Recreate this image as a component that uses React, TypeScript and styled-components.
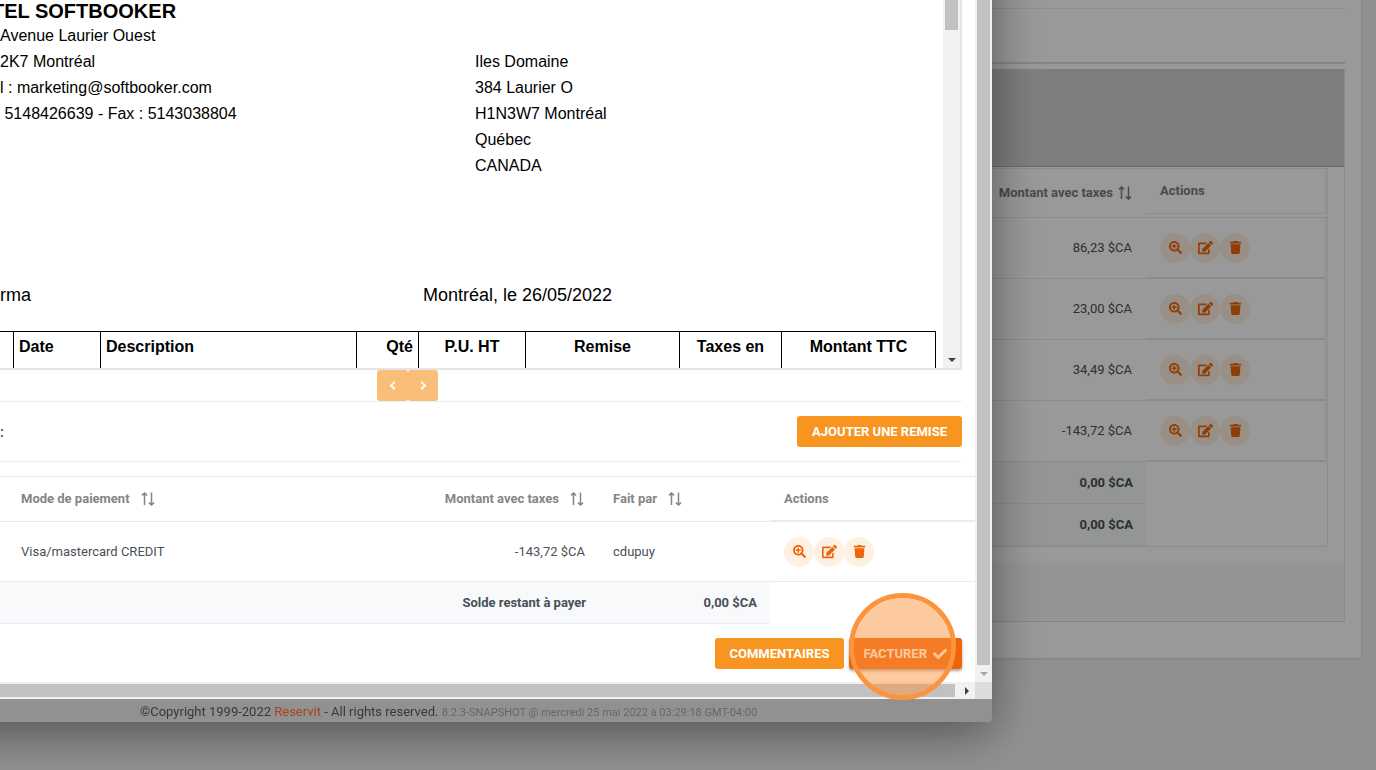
import React from "react";
import styled, { createGlobalStyle, css } from "styled-components";
import { FaSearchPlus, FaEdit, FaTrash, FaCheck, FaChevronLeft, FaChevronRight } from "react-icons/fa";

const GlobalStyle = createGlobalStyle`
  *, *::before, *::after { box-sizing: border-box; }
  body {
    margin: 0;
    overflow: hidden;
    background: #f1f1f1;
    color: #495057;
    font-family: Roboto, "Liberation Sans", sans-serif;
    font-size: 13px;
    line-height: 20px;
  }
  table { border-collapse: separate; border-spacing: 0; }
  th, td { padding: 0; text-align: left; font-weight: 400; }
  button { font: inherit; cursor: pointer; }
`;

/* ---------- shared pieces ---------- */

const SortSvg = styled.svg`
  flex: none;
  fill: none;
  stroke: currentColor;
  stroke-width: 1.5;
`;

const SortIcon = () => (
  <SortSvg width="14" height="14" viewBox="0 0 14 14" aria-hidden="true">
    <path d="M3.5 13V1M1 3.4 3.5 1 6 3.4" />
    <path d="M10.5 .5V13M8 10.6 10.5 13 13 10.6" />
  </SortSvg>
);

const RoundButton = styled.button`
  display: flex;
  align-items: center;
  justify-content: center;
  width: 30px;
  height: 30px;
  padding: 0;
  border: 0;
  border-radius: 50%;
  background: #fef0e2;
  color: #ed660c;
  font-size: 13px;
`;

const ActionList = styled.div`
  display: flex;
`;

const RowActions = () => (
  <ActionList>
    <RoundButton type="button" aria-label="Voir"><FaSearchPlus /></RoundButton>
    <RoundButton type="button" aria-label="Modifier"><FaEdit size={15} /></RoundButton>
    <RoundButton type="button" aria-label="Supprimer"><FaTrash /></RoundButton>
  </ActionList>
);

const SortLabel = styled.span<{ $gap: number }>`
  display: inline-flex;
  align-items: center;
  gap: ${(p) => p.$gap}px;
  white-space: nowrap;
`;

/* ---------- page behind the dialog ---------- */

const Page = styled.main`
  min-height: 100vh;
  padding-right: 15px;
`;

const Card = styled.section`
  padding: 8px 16px 36px 0;
  background: #fff;
  box-shadow: 0 1px 3px rgba(0, 0, 0, 0.12);
`;

const Strip = styled.div`
  height: 56px;
  margin-bottom: 5px;
  border-top: 1px solid #ebebeb;
  border-bottom: 2px solid #dedede;
`;

const Panel = styled.div`
  border-right: 1px solid #e6e6e6;
  border-bottom: 1px solid #dcdcdc;
`;

const PanelHeader = styled.div`
  height: 98px;
  background: #d3d3d3;
  border-bottom: 1px solid #b0b0b0;
`;

const PanelBody = styled.div`
  padding: 1px 16px 16px 0;
`;

const PanelFooter = styled.div`
  height: 58px;
  background: #f7f7f7;
`;

const AmountTable = styled.table`
  width: 100%;
  border: 1px solid #e9e9e9;
  border-left: 0;
`;

const AmountHead = styled.th`
  height: 49px;
  padding-right: 14px;
  border-bottom: 1px solid #e9e9e9;
  color: #7c7c7c;
  font-weight: 700;
  text-align: right;
`;

const AmountCell = styled.td<{ $total?: boolean }>`
  height: ${(p) => (p.$total ? 42 : 61)}px;
  padding-right: ${(p) => (p.$total ? 13 : 14)}px;
  border-bottom: 1px solid #e9e9e9;
  text-align: right;
  ${(p) => p.$total && css`
    background: #f7f8f9;
    font-weight: 700;
  `}
`;

const ActionHead = styled.th`
  width: 181px;
  padding-right: 1px;
  vertical-align: top;
  color: #7c7c7c;
  font-weight: 700;
  line-height: 44px;
  border-bottom: 1px solid #e9e9e9;
`;

const ActionHeadBox = styled.div`
  padding-left: 14px;
  border-right: 1px solid #e9e9e9;
  border-bottom: 1px solid #e9e9e9;
`;

const ActionCell = styled.td`
  padding-right: 1px;
  background: #fff;
`;

const ActionCellBox = styled.div`
  display: flex;
  align-items: center;
  height: 61px;
  padding-left: 14px;
  border-right: 1px solid #e9e9e9;
  border-bottom: 2px solid #e6e6e6;
`;

const Shade = styled.div`
  position: fixed;
  inset: 0;
  background: rgba(0, 0, 0, 0.4);
`;

/* ---------- dialog ---------- */

/* The dialog runs past the top and left edges of the window, and its shadow with it. */
const Dialog = styled.div`
  position: fixed;
  top: -80px;
  left: -80px;
  right: 384px;
  padding: 80px 0 0 80px;
  background: #919191;
  border-radius: 0 0 4px 0;
  box-shadow: 0 10px 50px rgba(0, 0, 0, 0.45);
`;

const ScrollFrame = styled.div`
  display: grid;
  grid-template-columns: minmax(0, 1fr) 17px;
  background: #fff;
`;

const Content = styled.div``;

const Inset = styled.div`
  padding-right: 13px;
`;

const VTrack = styled.div`
  display: flex;
  flex-direction: column;
  align-items: center;
  justify-content: space-between;
  width: 17px;
  background: #f1f1f1;
`;

const VThumb = styled.div<{ $grow?: boolean }>`
  width: 13px;
  height: 30px;
  flex-grow: ${(p) => (p.$grow ? 1 : 0)};
  background: #c1c1c1;
`;

const HTrack = styled.div`
  display: flex;
  align-items: center;
  height: 17px;
  background: #f1f1f1;
`;

const HThumb = styled.div`
  flex: 1;
  height: 13px;
  background: #c1c1c1;
`;

const ArrowBox = styled.span`
  display: flex;
  align-items: center;
  justify-content: center;
  width: 17px;
  height: 17px;
`;

const HArrowBox = styled(ArrowBox)`
  width: 20px;
  padding-left: 4px;
`;

const Corner = styled.div`
  background: #dcdcdc;
`;

const Down = ({ color }: { color: string }) => (
  <ArrowBox>
    <svg width="8" height="4" viewBox="0 0 8 4" aria-hidden="true"><path d="M0 0h8L4 4z" fill={color} /></svg>
  </ArrowBox>
);

const Right = () => (
  <HArrowBox>
    <svg width="4" height="8" viewBox="0 0 4 8" aria-hidden="true"><path d="M0 0v8l4-4z" fill="#404040" /></svg>
  </HArrowBox>
);

const DocFrame = styled.div`
  display: flex;
  height: 370px;
  overflow: hidden;
  border-right: 2px solid #e5e5e5;
  border-bottom: 2px solid #e5e5e5;
`;

const Doc = styled.div`
  flex: 1;
  min-width: 0;
  padding-right: 7px;
  color: #000;
  font-family: "Liberation Sans", Arial, sans-serif;
  font-size: 16px;
  line-height: 26px;
  white-space: nowrap;
`;

const DocTop = styled.div`
  display: grid;
  grid-template-columns: calc(50% + 7px) 1fr;
  height: 282px;
`;

const Sender = styled.address`
  font-style: normal;
`;

const HotelName = styled.h1`
  margin: 0 0 0 -8px;
  font-size: 20px;
  line-height: 23px;
`;

const Recipient = styled.address`
  padding-top: 49px;
  font-style: normal;
`;

const DocDate = styled.div`
  display: grid;
  grid-template-columns: 423px 1fr;
  height: 49px;
  font-size: 18px;
`;

const DocTable = styled.table`
  width: 100%;
  table-layout: fixed;
  border-top: 1px solid #000;
`;

const DocHead = styled.th<{ $align?: string }>`
  height: 60px;
  padding: 2px 5px;
  border-right: 1px solid #000;
  font-weight: 700;
  text-align: ${(p) => p.$align || "left"};
  vertical-align: top;
`;

const Pager = styled.nav`
  display: flex;
  justify-content: center;
  height: 32px;
  padding-right: 147px;
  border-bottom: 1px solid #eee;
`;

const PagerButton = styled.button`
  width: 31px;
  height: 31px;
  padding: 0;
  border: 0;
  border-radius: 3px;
  background: #fabe78;
  color: #fff;
  font-size: 9px;

  & + & { width: 30px; }
  & svg {
    display: block;
    margin: 0 auto;
    stroke: currentColor;
    stroke-width: 50;
  }
`;

const Discount = styled.div`
  display: flex;
  align-items: center;
  justify-content: space-between;
  height: 60px;
  margin-bottom: 14px;
  border-bottom: 1px solid #eee;
  font-size: 15px;
  font-weight: 500;
`;

const Button = styled.button<{ $primary?: boolean; $wide?: boolean }>`
  display: flex;
  align-items: center;
  gap: 6px;
  height: 31px;
  padding: 0 ${(p) => (p.$primary || p.$wide ? 15 : 14)}px;
  border: 0;
  border-radius: 3px;
  background: ${(p) => (p.$primary ? "#ef6309" : "#f89520")};
  color: #fff;
  font-size: 13px;
  font-weight: 700;
  white-space: nowrap;
  box-shadow: ${(p) => (p.$primary ? "0 2px 3px rgba(0, 0, 0, 0.35)" : "none")};
`;

const PayTable = styled.table`
  width: 100%;
  table-layout: fixed;
  border-top: 1px solid #eaeaea;
`;

const PayHead = styled.th<{ $right?: boolean; $action?: boolean }>`
  height: 45px;
  padding: 0 ${(p) => (p.$right ? 15 : 0)}px 0 14px;
  border-bottom: ${(p) => (p.$action ? "2px solid #ececec" : "1px solid #ececec")};
  color: #858585;
  font-weight: 700;
  text-align: ${(p) => (p.$right ? "right" : "left")};

  &:first-child { padding-left: 21px; }
`;

const PayCell = styled.td<{ $right?: boolean }>`
  height: 60px;
  padding: 0 14px;
  border-bottom: 1px solid #ececec;
  text-align: ${(p) => (p.$right ? "right" : "left")};

  &:first-child { padding-left: 21px; }
`;

const TotalCell = styled.td`
  height: 42px;
  padding-right: 13px;
  background: #f8f9fb;
  border-bottom: 1px solid #e9ebee;
  font-weight: 700;
  text-align: right;
`;

const DialogActions = styled.div`
  display: flex;
  justify-content: flex-end;
  gap: 5px;
  padding: 14px 0 13px;
`;

const Highlighted = styled.div`
  position: relative;
`;

const ClickRing = styled.span`
  position: absolute;
  z-index: 2;
  top: -45px;
  left: 0;
  width: 107px;
  height: 107px;
  border: 5px solid #fb943d;
  border-radius: 50%;
  background: rgba(251, 148, 64, 0.5);
  background-clip: padding-box;
  pointer-events: none;
`;

const Footer = styled.footer`
  height: 23px;
  padding-left: 140px;
  color: #383838;
  line-height: 25px;
  white-space: nowrap;
`;

const Brand = styled.a`
  color: #a8431c;
  text-decoration: none;
`;

const Version = styled.small`
  color: #666;
  font-size: 11px;
`;

const amounts = ["86,23 $CA", "23,00 $CA", "34,49 $CA", "-143,72 $CA"];

const docColumns = [
  { label: "", width: "14px" },
  { label: "Date", width: "87px" },
  { label: "Description" },
  { label: "Qté", width: "62px", align: "right" },
  { label: "P.U. HT", width: "107px", align: "center" },
  { label: "Remise", width: "154px", align: "center" },
  { label: "Taxes en", width: "102px", align: "center" },
  { label: "Montant TTC", width: "154px", align: "center" },
];

export default function App() {
  return (
    <>
      <GlobalStyle />
      <Page>
        <Card>
          <Strip />
          <Panel>
            <PanelHeader />
            <PanelBody>
              <AmountTable>
                <thead>
                  <tr>
                    <AmountHead scope="col"><SortLabel $gap={5}>Montant avec taxes <SortIcon /></SortLabel></AmountHead>
                    <ActionHead scope="col"><ActionHeadBox>Actions</ActionHeadBox></ActionHead>
                  </tr>
                </thead>
                <tbody>
                  {amounts.map((amount) => (
                    <tr key={amount}>
                      <AmountCell>{amount}</AmountCell>
                      <ActionCell><ActionCellBox><RowActions /></ActionCellBox></ActionCell>
                    </tr>
                  ))}
                  <tr><AmountCell $total>0,00 $CA</AmountCell><td /></tr>
                  <tr><AmountCell $total>0,00 $CA</AmountCell><td /></tr>
                </tbody>
              </AmountTable>
            </PanelBody>
            <PanelFooter />
          </Panel>
        </Card>
      </Page>
      <Shade />

      <Dialog role="dialog" aria-label="Facture">
        <ScrollFrame>
          <Content>
            <Inset>
              <DocFrame>
                <Doc>
                  <DocTop>
                    <Sender>
                      <HotelName>TEL SOFTBOOKER</HotelName>
                      <div>Avenue Laurier Ouest</div>
                      <div>2K7 Montréal</div>
                      <div>l : marketing@softbooker.com</div>
                      <div>&nbsp;5148426639 - Fax : 5143038804</div>
                    </Sender>
                    <Recipient>
                      <div>Iles Domaine</div>
                      <div>384 Laurier O</div>
                      <div>H1N3W7 Montréal</div>
                      <div>Québec</div>
                      <div>CANADA</div>
                    </Recipient>
                  </DocTop>
                  <DocDate><span>rma</span><span>Montréal, le 26/05/2022</span></DocDate>
                  <DocTable>
                    <colgroup>
                      {docColumns.map((c) => <col key={c.label} width={c.width} />)}
                    </colgroup>
                    <thead>
                      <tr>
                        {docColumns.map((c) => <DocHead key={c.label} $align={c.align}>{c.label}</DocHead>)}
                      </tr>
                    </thead>
                  </DocTable>
                </Doc>
                <VTrack><VThumb /><Down color="#404040" /></VTrack>
              </DocFrame>
              <Pager aria-label="Pages">
                <PagerButton type="button" aria-label="Page précédente"><FaChevronLeft /></PagerButton>
                <PagerButton type="button" aria-label="Page suivante"><FaChevronRight /></PagerButton>
              </Pager>
              <Discount>
                <span>:</span>
                <Button type="button" $wide>AJOUTER UNE REMISE</Button>
              </Discount>
            </Inset>
            <PayTable>
              <colgroup>
                <col />
                <col width="200" />
                <col width="171" />
                <col width="205" />
              </colgroup>
              <thead>
                <tr>
                  <PayHead scope="col"><SortLabel $gap={11}>Mode de paiement <SortIcon /></SortLabel></PayHead>
                  <PayHead scope="col" $right><SortLabel $gap={11}>Montant avec taxes <SortIcon /></SortLabel></PayHead>
                  <PayHead scope="col"><SortLabel $gap={11}>Fait par <SortIcon /></SortLabel></PayHead>
                  <PayHead scope="col" $action>Actions</PayHead>
                </tr>
              </thead>
              <tbody>
                <tr>
                  <PayCell>Visa/mastercard CREDIT</PayCell>
                  <PayCell $right>-143,72 $CA</PayCell>
                  <PayCell>cdupuy</PayCell>
                  <PayCell><RowActions /></PayCell>
                </tr>
                <tr>
                  <TotalCell colSpan={2}>Solde restant à payer</TotalCell>
                  <TotalCell>0,00 $CA</TotalCell>
                  <td />
                </tr>
              </tbody>
            </PayTable>
            <Inset>
              <DialogActions>
                <Button type="button">COMMENTAIRES</Button>
                <Highlighted>
                  <Button type="button" $primary>FACTURER <FaCheck size={14} /></Button>
                  <ClickRing />
                </Highlighted>
              </DialogActions>
            </Inset>
          </Content>
          <VTrack><VThumb $grow /><Down color="#a3a3a3" /></VTrack>
          <HTrack><HThumb /><Right /></HTrack>
          <Corner />
        </ScrollFrame>
        <Footer>
          ©Copyright 1999-2022 <Brand href="#">Reservit</Brand> - All rights reserved. <Version>8.2.3-SNAPSHOT @ mercredi 25 mai 2022 à 03:29:18 GMT-04:00</Version>
        </Footer>
      </Dialog>
    </>
  );
}
